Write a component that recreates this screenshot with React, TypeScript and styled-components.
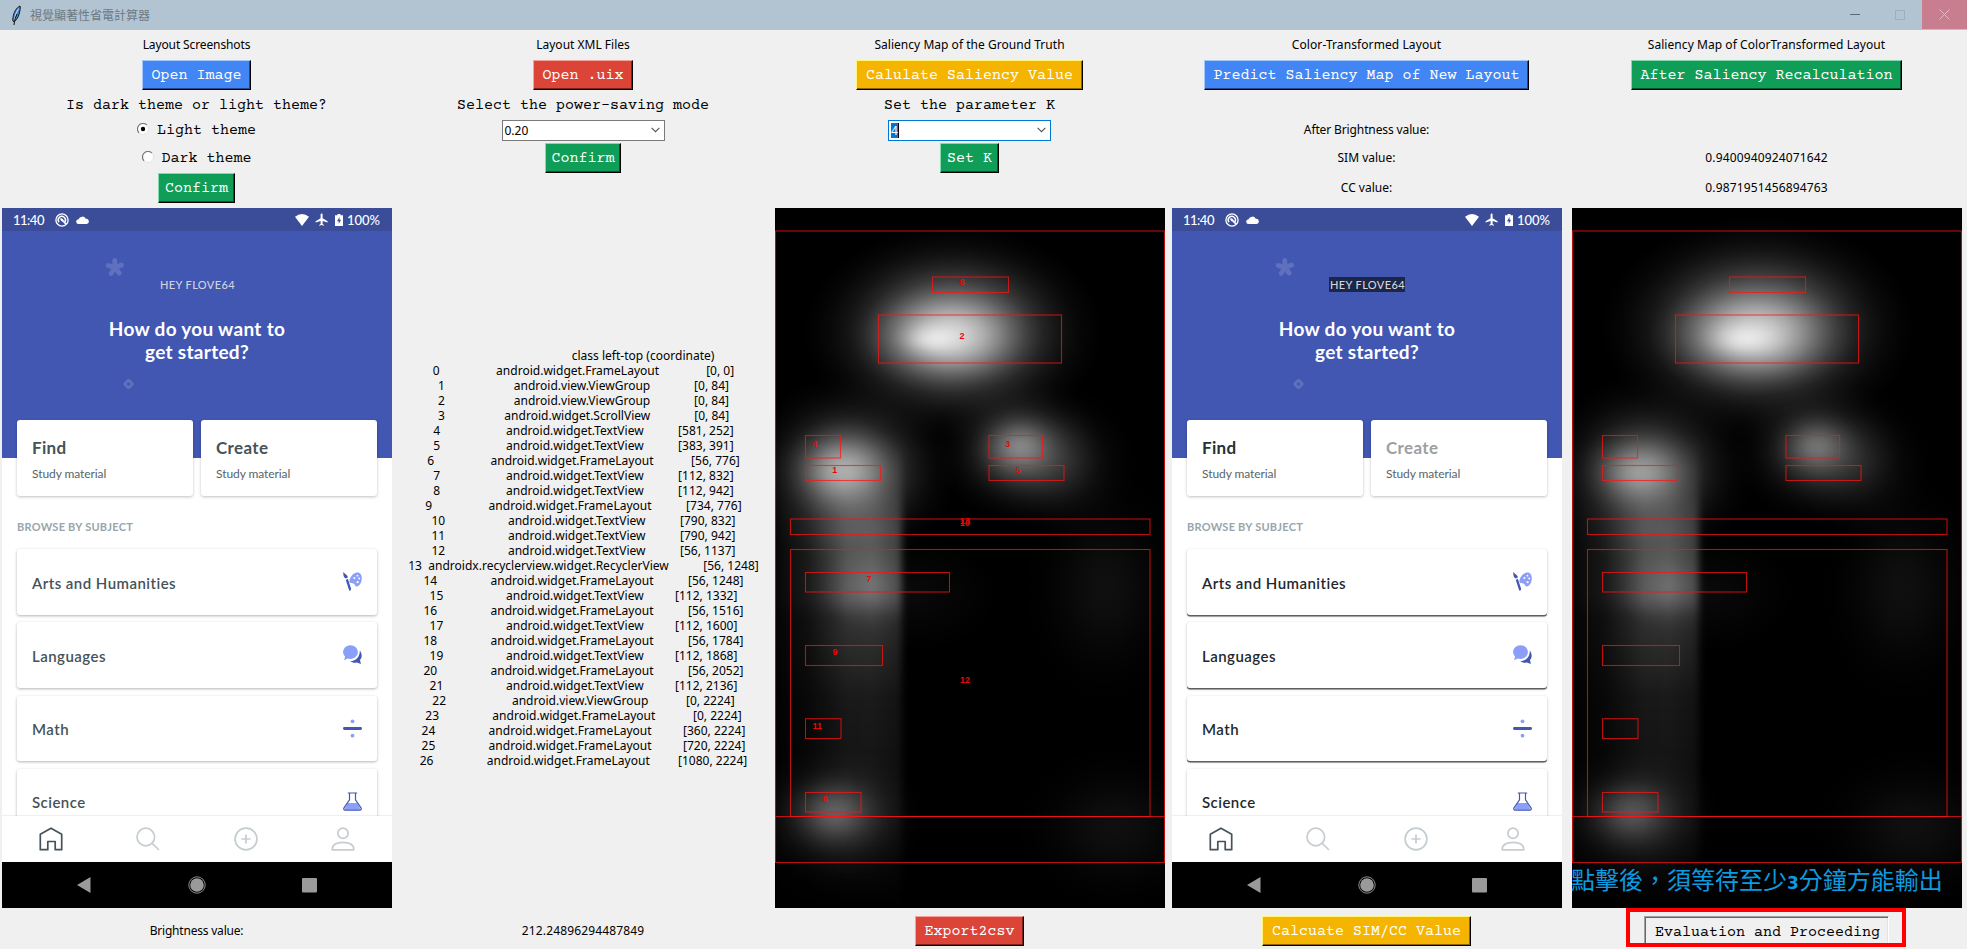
import React from "react";
import styled, { createGlobalStyle, css } from "styled-components";

const UI = `"Noto Sans", "Noto Sans CJK TC", sans-serif`;
const MONO = `"Courier Prime", "Liberation Mono", monospace`;
const PHONE = `Lato, "Open Sans", sans-serif`;

const Global = createGlobalStyle`
  * { box-sizing: border-box; }
  html, body { margin: 0; padding: 0; }
  body { background: #f0f0f0; font-family: ${UI}; font-size: 12px; color: #000; overflow: hidden; }
  svg { display: block; }
`;

/* ---------- window ---------- */

const Window = styled.div`
  width: 1967px;
  height: 949px;
  background: #f0f0f0;
  overflow: hidden;
`;

const TitleBar = styled.header`
  display: flex;
  align-items: center;
  height: 30px;
  padding-left: 10px;
  background: #b2c3d1;
`;

const TitleText = styled.span`
  flex: 1;
  margin-left: 7px;
  padding-bottom: 1px;
  color: #6c7a85;
  font-family: "Noto Sans CJK TC", sans-serif;
  font-size: 12px;
`;

const WindowButton = styled.div<{ $close?: boolean }>`
  display: flex;
  align-items: center;
  justify-content: center;
  align-self: flex-start;
  width: 45px;
  height: 29px;
  background: ${(p) => (p.$close ? "#c87e8e" : "transparent")};
`;

const Board = styled.main`
  display: grid;
  grid-template-columns: 394px 379px 394px 400px 400px;
  grid-template-rows: 29px 32px 26px 26px 30px 30px 710px 36px;
`;

const Cell = styled.div<{ $col: number; $row: number }>`
  grid-column: ${(p) => p.$col};
  grid-row: ${(p) => p.$row};
  display: flex;
  align-items: center;
  justify-content: center;
  position: relative;
  min-width: 0;
  padding-right: ${(p) => (p.$row === 7 ? 0 : 1)}px;
`;

const Label = styled.span<{ $ls?: number }>`
  font-size: 12px;
  line-height: 16px;
  letter-spacing: ${(p) => p.$ls ?? 0}px;
  white-space: nowrap;
`;

const Question = styled.span`
  font-family: ${MONO};
  font-size: 15px;
  line-height: 18px;
  padding-top: 4px;
  white-space: nowrap;
`;

type Tone = "blue" | "red" | "yellow" | "green";
const tones: Record<Tone, { bg: string; light: string; dark: string }> = {
  blue: { bg: "#4285f4", light: "#a3c6fb", dark: "#24498a" },
  red: { bg: "#db4437", light: "#f5a29c", dark: "#7c231b" },
  yellow: { bg: "#f4b400", light: "#fff57c", dark: "#8a6500" },
  green: { bg: "#0f9d58", light: "#84d9ae", dark: "#075430" },
};

const TkButton = styled.button<{ $tone: Tone; $tight?: boolean }>`
  height: 30px;
  margin: 0;
  padding: 2px ${(p) => (p.$tight ? 6 : 9)}px 0;
  border: 1px solid #000;
  border-top-color: ${(p) => tones[p.$tone].light};
  border-left-color: ${(p) => tones[p.$tone].light};
  box-shadow: inset -1px -1px 0 ${(p) => tones[p.$tone].dark};
  background: ${(p) => tones[p.$tone].bg};
  color: #fff;
  font-family: ${MONO};
  font-size: 15px;
  line-height: 18px;
  white-space: nowrap;
`;

const PressedButton = styled.button`
  height: 30px;
  padding: 3px 8px 0 10px;
  border: 1px solid #a0a0a0;
  border-right-color: #fff;
  border-bottom-color: #fff;
  box-shadow: inset 1px 1px 0 #696969, inset -1px 0 0 #e3e3e3;
  background: #f0f0f0;
  color: #000;
  font-family: ${MONO};
  font-size: 15px;
  line-height: 18px;
  white-space: nowrap;
`;

const Highlight = styled.div`
  position: absolute;
  left: 59px;
  top: -5px;
  width: 280px;
  height: 39px;
  border: 4px solid #fe0000;
`;

const RadioLine = styled.label`
  display: flex;
  align-items: center;
  gap: 8px;
  font-family: ${MONO};
  font-size: 15px;
  line-height: 18px;
  span { padding-top: 2px; }
`;

const Combo = styled.div<{ $active?: boolean }>`
  display: flex;
  align-items: center;
  justify-content: space-between;
  width: 163px;
  height: 21px;
  padding: 0 4px 0 2px;
  border: 1px solid ${(p) => (p.$active ? "#0078d7" : "#7a7a7a")};
  background: #fff;
`;

const ComboValue = styled.span<{ $selected?: boolean }>`
  font-size: 12px;
  line-height: 15px;
  ${(p) =>
    p.$selected &&
    css`
      background: #0078d7;
      color: #fff;
      border-right: 1px solid #000;
    `}
`;

const Dump = styled.pre`
  margin: 0;
  font-family: ${UI};
  font-size: 12px;
  line-height: 15px;
  letter-spacing: 0.015px;
  text-align: center;
`;

const Notice = styled.div`
  position: absolute;
  left: 4px;
  top: 658px;
  font-family: "Noto Sans CJK TC", sans-serif;
  font-size: 24px;
  line-height: 36px;
  color: #0a9be0;
  white-space: nowrap;
  b { font-family: "DejaVu Sans", sans-serif; font-size: 17px; font-weight: 700; }
`;

/* ---------- phone ---------- */

const Phone = styled.div`
  display: flex;
  flex-direction: column;
  width: 390px;
  height: 700px;
  background: #fff;
  font-family: ${PHONE};
  overflow: hidden;
`;

const StatusBar = styled.div`
  display: flex;
  align-items: center;
  height: 23px;
  padding: 0 12px 0 11px;
  background: #3b4d98;
  color: #fff;
  font-size: 13px;
  font-weight: 500;
  flex: none;
`;
const Clock = styled.span`
  width: 42px;
  letter-spacing: -0.5px;
`;
const Percent = styled.span`
  margin-left: 4px;
  letter-spacing: 0;
`;
const StatusIcons = styled.div`
  display: flex;
  align-items: center;
  gap: 7px;
  flex: 1;
`;

const Hero = styled.div`
  position: relative;
  height: 227px;
  flex: none;
  display: flex;
  flex-direction: column;
  align-items: center;
  background: #4257b2;
`;
const Decor = styled.svg`
  position: absolute;
  left: 0;
  top: 0;
`;
const Greeting = styled.div<{ $boxed?: boolean }>`
  margin-top: 46px;
  height: 15px;
  padding: 0 0 0 1px;
  font-size: 11px;
  line-height: 16px;
  font-weight: 500;
  letter-spacing: 0.38px;
  color: ${(p) => (p.$boxed ? "#d3d5da" : "#d0d3df")};
  background: ${(p) => (p.$boxed ? "#1c2647" : "transparent")};
  position: relative;
`;
const Headline = styled.h1`
  margin: 25px 0 0;
  font-size: 19px;
  line-height: 23px;
  font-weight: 700;
  letter-spacing: 0.3px;
  color: #fff;
  text-align: center;
  position: relative;
`;

const Tiles = styled.div`
  position: relative;
  display: flex;
  gap: 8px;
  margin: -38px 15px 0;
  flex: none;
`;
const Tile = styled.div`
  flex: 1;
  height: 76px;
  padding: 17px 0 0 15px;
  border-radius: 3px;
  background: #fff;
  box-shadow: 0 1px 3px rgba(0, 0, 0, 0.25);
`;
const TileTitle = styled.div<{ $color: string }>`
  font-size: 17px;
  line-height: 21px;
  font-weight: 700;
  letter-spacing: 0.35px;
  color: ${(p) => p.$color};
`;
const TileSub = styled.div`
  margin-top: 8px;
  font-size: 12px;
  line-height: 15px;
  letter-spacing: -0.08px;
  color: #586469;
`;

const Section = styled.div`
  margin: 23px 15px 0;
  height: 16px;
  flex: none;
  font-size: 11px;
  line-height: 16px;
  font-weight: 700;
  letter-spacing: 0.24px;
  color: #98a6ab;
`;

const List = styled.div`
  display: flex;
  flex-direction: column;
  gap: 7.5px;
  flex: 1;
  min-height: 0;
  padding: 14.3px 15px 0;
  overflow: hidden;
`;
const Item = styled.div<{ $hard?: boolean }>`
  display: flex;
  flex: none;
  align-items: center;
  justify-content: space-between;
  height: 65.7px;
  padding: 0 15px 0 15px;
  border-radius: 3px;
  background: #fff;
  color: ${(p) => (p.$hard ? "#1f292d" : "#455358")};
  font-size: 15px;
  line-height: 20px;
  font-weight: 600;
  letter-spacing: 0.46px;
  box-shadow: ${(p) =>
    p.$hard
      ? "0 1.5px 0 #5d5f61, 0 1px 3px rgba(0,0,0,.25)"
      : "0 1px 3px rgba(0,0,0,.3)"};
  span { padding-top: 1px; }
  svg { margin-top: -1px; }
`;

const Tabs = styled.nav`
  display: flex;
  height: 46px;
  flex: none;
  background: #fff;
  box-shadow: 0 -1px 1px rgba(0, 0, 0, 0.06);
  > div { flex: 1; display: flex; align-items: center; justify-content: center; }
`;
const SystemBar = styled.div`
  display: flex;
  align-items: center;
  justify-content: center;
  gap: 95px;
  height: 46px;
  flex: none;
  background: #000;
`;

const ArtIcon = () => (
  <svg width="19" height="19" viewBox="0 0 19 19">
    <path d="M.3 0C.3 2 .2 4 1.600 5.800l1.300.6 1.900-1C5 3.500 2.500 2.500.3 0Z" fill="#4257b2" />
    <path d="M2.800 8l2-1.200L8.100 16.700q.3 1.800-1.800 2Z" fill="#4257b2" />
    <path d="M13 .8c3.800-1.200 6 2 5.800 6-.2 4-2.600 8-5.300 7.700-1.800-.2-1.200-2-2.600-2.800-1.800-1-4.200.2-4.500-2C6.100 6.500 9.200 2 13 .8Z" fill="#8b9ef8" />
    <g fill="#fff">
      <circle cx="11.400" cy="6" r="1" /><circle cx="14.400" cy="3.700" r=".9" />
      <circle cx="16.200" cy="6.500" r=".9" /><circle cx="14.600" cy="10.200" r="1.100" />
    </g>
  </svg>
);
const ChatIcon = () => (
  <svg width="19" height="19" viewBox="0 0 19 19">
    <path d="M16.800 5.600c2.300 3 2.600 6.700.2 9.300l.9 4-4-1.300c-2.300.6-5 .1-6.600-1.500 5.500.2 9.700-4.200 9.500-10.500Z" fill="#4257b2" />
    <path d="M7.500.2c4.100 0 7.400 3 7.400 6.800s-3.300 6.900-7.400 6.900c-1 0-1.900-.2-2.700-.5L1.200 15.300l.9-4C.8 10.200.1 8.700.1 7 .1 3.200 3.400.2 7.500.2Z" fill="#8b9ef8" />
  </svg>
);
const MathIcon = () => (
  <svg width="19" height="19" viewBox="0 0 19 19">
    <circle cx="9.500" cy="2.300" r="1.900" fill="#8b9ef8" />
    <circle cx="9.500" cy="16.700" r="1.900" fill="#8b9ef8" />
    <rect x="0" y="8" width="19" height="3" rx="1.400" fill="#4257b2" />
  </svg>
);
const FlaskIcon = () => (
  <svg width="19" height="19" viewBox="0 0 19 19">
    <path d="M4.800 11h9.400l3 5.500-1 1.200H2.800l-1-1.200Z" fill="#8b9ef8" />
    <path d="M4.800 1h9.400M6.500 1v6.800L1 15.800c-.7 1.200 0 2.300 1.200 2.300h14.600c1.200 0 1.900-1.100 1.200-2.300L12.500 7.800V1" fill="none" stroke="#4257b2" strokeWidth="1.200" />
  </svg>
);

const subjects = [
  { name: "Arts and Humanities", Icon: ArtIcon },
  { name: "Languages", Icon: ChatIcon },
  { name: "Math", Icon: MathIcon },
  { name: "Science", Icon: FlaskIcon },
];

function PhoneScreen({ altered }: { altered?: boolean }) {
  return (
    <Phone>
      <StatusBar>
        <Clock>11:40</Clock>
        <StatusIcons>
          <svg width="14" height="14" viewBox="0 0 14 14" fill="none" stroke="#fff">
            <circle cx="7" cy="7" r="6.100" strokeWidth="1.300" />
            <path d="M4 9.200A3.600 3.600 0 1 1 9.800 9" strokeWidth="1.500" />
            <path d="M5.500 5.500l5.500 5.500" strokeWidth="1.700" />
            <circle cx="7" cy="7" r="1.300" fill="#fff" stroke="none" />
          </svg>
          <svg width="13" height="8" viewBox="0 0 13 8">
            <path d="M2.700 8A2.400 2.400 0 0 1 2.500 3.200 4 4 0 0 1 9.800 2.800 2.600 2.600 0 0 1 10.600 8Z" fill="#fff" />
          </svg>
        </StatusIcons>
        <svg width="14" height="12" viewBox="0 0 14 12"><path d="M0 2.800Q7-2.600 14 2.800L7 12Z" fill="#fff" /></svg>
        <svg width="26" height="13" viewBox="0 0 26 13">
          <path d="M12.600.5c.8 0 1 .6 1 1.300v3.400l5 3v1.200l-5-1.500v3l1.400 1v.8l-2.400-.6-2.400.6v-.8l1.400-1v-3l-5 1.500V8.200l5-3V1.800c0-.7.200-1.300 1-1.300Z" fill="#fff" />
        </svg>
        <svg width="8" height="12" viewBox="0 0 8 12">
          <path d="M2.500 0h3v1.200H8V12H0V1.200h2.500Z" fill="#fff" />
          <path d="M4.600 3L2 7.200h1.700V10l2.400-4.200H4.500Z" fill="#3b4d98" />
        </svg>
        <Percent>100%</Percent>
      </StatusBar>
      <Hero>
        <Decor width="390" height="227" viewBox="0 0 390 227">
          <g stroke="#5f71be" strokeWidth="4.800" strokeLinecap="round">
            {[-92, -20, 52, 124, 196].map((a) => (
              <line key={a} x1="113" y1="36.500" x2={113 + 7 * Math.cos((a * Math.PI) / 180)} y2={36.5 + 7.2 * Math.sin((a * Math.PI) / 180)} />
            ))}
          </g>
          <rect x="-2.800" y="-2.800" width="5.600" height="5.600" rx=".6" transform="translate(126.500 153) rotate(45)" fill="none" stroke="#5f71be" strokeWidth="2.800" />
        </Decor>
        <Greeting $boxed={altered}>HEY FLOVE64</Greeting>
        <Headline>How do you want to<br />get started?</Headline>
      </Hero>
      <Tiles>
        <Tile>
          <TileTitle $color={altered ? "#263238" : "#455358"}>Find</TileTitle>
          <TileSub>Study material</TileSub>
        </Tile>
        <Tile>
          <TileTitle $color={altered ? "#9da0a1" : "#455358"}>Create</TileTitle>
          <TileSub>Study material</TileSub>
        </Tile>
      </Tiles>
      <Section>BROWSE BY SUBJECT</Section>
      <List>
        {subjects.map(({ name, Icon }) => (
          <Item key={name} $hard={altered}>
            <span>{name}</span>
            <Icon />
          </Item>
        ))}
      </List>
      <Tabs>
        <div>
          <svg width="24" height="24" viewBox="0 0 24 24" fill="none" stroke="#455358" strokeWidth="1.700" strokeLinejoin="round">
            <path d="M1.300 7.200L12 1.200l10.700 6v15.500h-6.500v-8.200H8.800v8.200H1.300Z" />
          </svg>
        </div>
        <div>
          <svg width="24" height="24" viewBox="0 0 24 24" fill="none" stroke="#c5cdd1" strokeWidth="1.700">
            <circle cx="9.800" cy="10" r="8.800" /><path d="M16 16.200l7 6.800" />
          </svg>
        </div>
        <div>
          <svg width="24" height="24" viewBox="0 0 24 24" fill="none" stroke="#c5cdd1" strokeWidth="1.700">
            <circle cx="12" cy="12" r="10.900" /><path d="M12 7.400v9.200M7.400 12h9.200" />
          </svg>
        </div>
        <div>
          <svg width="24" height="24" viewBox="0 0 24 24" fill="none" stroke="#c5cdd1" strokeWidth="1.700" strokeLinejoin="round">
            <circle cx="12" cy="6.200" r="5.100" /><path d="M1.200 22.800C1 17.500 6 15.300 12 15.300s11 2.200 10.800 7.500Z" />
          </svg>
        </div>
      </Tabs>
      <SystemBar>
        <svg width="17" height="18" viewBox="0 0 17 18"><path d="M14.500 1v16L1 9Z" fill="#9a9a9a" /></svg>
        <svg width="18" height="18" viewBox="0 0 18 18">
          <circle cx="9" cy="9" r="8.200" fill="none" stroke="#9a9a9a" strokeWidth=".9" />
          <circle cx="9" cy="9" r="6.800" fill="#9a9a9a" />
        </svg>
        <svg width="17" height="18" viewBox="0 0 17 18"><rect x="1" y="2" width="15" height="14.500" rx="1" fill="#9a9a9a" /></svg>
      </SystemBar>
    </Phone>
  );
}

/* ---------- saliency map ---------- */

type Blob = [cx: number, cy: number, rx: number, ry: number, level: number];

const groundBlobs: Blob[] = [
  [178, 124, 150, 108, 0.62],
  [172, 129, 96, 56, 0.6],
  [158, 131, 44, 22, 0.5],
  [75, 262, 108, 96, 0.42],
  [66, 262, 66, 54, 0.42],
  [244, 242, 84, 74, 0.34],
  [244, 238, 50, 42, 0.25],
  [285, 255, 80, 80, 0.14],
  [60, 608, 92, 72, 0.2],
  [59, 604, 56, 46, 0.18],
  [330, 380, 90, 130, 0.06],
  [340, 620, 110, 90, 0.06],
];
const alteredBlobs: Blob[] = [
  [186, 120, 158, 112, 0.6],
  [180, 129, 104, 60, 0.6],
  [172, 131, 50, 24, 0.5],
  [75, 262, 108, 96, 0.36],
  [66, 264, 66, 50, 0.36],
  [244, 242, 84, 74, 0.27],
  [244, 238, 50, 42, 0.22],
  [285, 255, 80, 80, 0.11],
  [60, 608, 92, 72, 0.17],
  [59, 604, 56, 46, 0.15],
  [330, 380, 90, 130, 0.06],
  [340, 620, 110, 90, 0.06],
];

const boxes: [number, number, number, number][] = [
  [0.5, 23, 389, 631.5],
  [157.5, 69, 76, 15.5],
  [103.5, 107, 183, 48],
  [30.5, 227.5, 35, 22.5],
  [30.5, 257.5, 75, 15],
  [214, 227.5, 53.5, 22.5],
  [214, 257.5, 75, 15],
  [15.5, 311, 359.5, 15.5],
  [15.5, 341.5, 359.5, 267],
  [30.5, 364.5, 144, 19.5],
  [30.5, 437.5, 77, 20],
  [30.5, 510.7, 35.5, 19.8],
  [30.5, 584.5, 55.5, 19.5],
];

const marks: [string, number, number][] = [
  ["8", 187, 73.500], ["2", 187, 127.8], ["4", 39.7, 235.5], ["3", 232.7, 235.5],
  ["1", 59.7, 262.2], ["5", 243, 262.2], ["13", 190, 312.5], ["10", 190, 315],
  ["7", 94, 371], ["9", 60, 444.2], ["12", 190, 471.5], ["11", 42.3, 517.5], ["6", 50, 591],
];

const falloff = [0, 0.1, 0.2, 0.3, 0.4, 0.5, 0.6, 0.7, 0.8, 0.9, 1];
const glow = (r: number) => Math.max(0, Math.exp(-r * r * 4) - 0.018 * r);

function SaliencyMap({ id, blobs, numbered, strip }: { id: string; blobs: Blob[]; numbered?: boolean; strip: number }) {
  return (
    <svg width="390" height="700" viewBox="0 0 390 700">
      <defs>
        {blobs.map((b, i) => (
          <radialGradient key={i} id={`${id}-${i}`}>
            {falloff.map((r) => (
              <stop key={r} offset={r} stopColor="#fff" stopOpacity={b[4] * glow(r)} />
            ))}
          </radialGradient>
        ))}
        <linearGradient id={`${id}-v`} x1="0" x2="0" y1="230" y2="700" gradientUnits="userSpaceOnUse">
          <stop offset="0" stopColor="#fff" stopOpacity="0" />
          <stop offset=".1" stopColor="#fff" stopOpacity={0.1 * strip} />
          <stop offset=".2" stopColor="#fff" stopOpacity={0.29 * strip} />
          <stop offset=".34" stopColor="#fff" stopOpacity={0.28 * strip} />
          <stop offset=".38" stopColor="#fff" stopOpacity={0.18 * strip} />
          <stop offset=".47" stopColor="#fff" stopOpacity={0.14 * strip} />
          <stop offset=".55" stopColor="#fff" stopOpacity={0.09 * strip} />
          <stop offset=".8" stopColor="#fff" stopOpacity={0.06 * strip} />
          <stop offset="1" stopColor="#fff" stopOpacity="0" />
        </linearGradient>
        <linearGradient id={`${id}-h`} x1="0" x2="130" y1="0" y2="0" gradientUnits="userSpaceOnUse">
          <stop offset="0" stopColor="#fff" stopOpacity=".08" />
          <stop offset=".25" stopColor="#fff" stopOpacity=".3" />
          <stop offset=".55" stopColor="#fff" stopOpacity=".95" />
          <stop offset=".75" stopColor="#fff" />
          <stop offset="1" stopColor="#fff" stopOpacity=".65" />
        </linearGradient>
        <mask id={`${id}-m`} maskUnits="userSpaceOnUse" x="0" y="0" width="390" height="700">
          <rect width="127" height="700" fill={`url(#${id}-h)`} />
        </mask>
        <radialGradient id={`${id}-p`}>
          <stop offset="0" stopColor="#fff" stopOpacity={0.16 * strip} />
          <stop offset=".5" stopColor="#fff" stopOpacity={0.07 * strip} />
          <stop offset="1" stopColor="#fff" stopOpacity="0" />
        </radialGradient>
        <filter id={`${id}-b`} x="-10%" y="-10%" width="120%" height="120%"><feGaussianBlur stdDeviation="3.5" /></filter>
      </defs>
      <rect width="390" height="700" fill="#000" />
      <g filter={`url(#${id}-b)`}>
        <g mask={`url(#${id}-m)`}>
          <rect x="0" y="230" width="130" height="470" fill={`url(#${id}-v)`} />
          <ellipse cx="98" cy="378" rx="56" ry="44" fill={`url(#${id}-p)`} />
        </g>
      </g>
      <ellipse cx="135" cy="385" rx="90" ry="60" fill={`url(#${id}-p)`} opacity=".22" />
      {blobs.map((b, i) => (
        <ellipse key={i} cx={b[0]} cy={b[1]} rx={b[2]} ry={b[3]} fill={`url(#${id}-${i})`} />
      ))}
      <g fill="none" stroke="#ff1414" strokeOpacity=".72" strokeWidth="1.100">
        {boxes.map(([x, y, w, h], i) => <rect key={i} x={x} y={y} width={w} height={h} />)}
        <line x1="0" x2="390" y1="608.500" y2="608.500" />
      </g>
      {numbered && (
        <g fill="#ea0808" fontFamily="Liberation Sans" fontSize="9" fontWeight="700" textAnchor="middle">
          {marks.map(([t, x, y]) => <text key={t} x={x} y={y + 3.2}>{t}</text>)}
        </g>
      )}
    </svg>
  );
}

/* ---------- widget dump ---------- */

const frame = "android.widget.FrameLayout";
const group = "android.view.ViewGroup";
const textView = "android.widget.TextView";
const widgets: [string, string][] = [
  [frame, "[0, 0]"], [group, "[0, 84]"], [group, "[0, 84]"], ["android.widget.ScrollView", "[0, 84]"],
  [textView, "[581, 252]"], [textView, "[383, 391]"], [frame, "[56, 776]"], [textView, "[112, 832]"],
  [textView, "[112, 942]"], [frame, "[734, 776]"], [textView, "[790, 832]"], [textView, "[790, 942]"],
  [textView, "[56, 1137]"], ["androidx.recyclerview.widget.RecyclerView", "[56, 1248]"], [frame, "[56, 1248]"],
  [textView, "[112, 1332]"], [frame, "[56, 1516]"], [textView, "[112, 1600]"], [frame, "[56, 1784]"],
  [textView, "[112, 1868]"], [frame, "[56, 2052]"], [textView, "[112, 2136]"], [group, "[0, 2224]"],
  [frame, "[0, 2224]"], [frame, "[360, 2224]"], [frame, "[720, 2224]"], [frame, "[1080, 2224]"],
];
const dumpText = [
  " ".repeat(38) + "class left-top (coordinate)",
  ...widgets.map(([cls, pos], i) => String(i).padEnd(4) + cls.padStart(41) + pos.padStart(21)),
].join("\n");

const Chevron = () => (
  <svg width="9" height="6" viewBox="0 0 9 6" fill="none" stroke="#555" strokeWidth="1.100"><path d="M.6.8l3.900 3.900L8.400.8" /></svg>
);

const Radio = ({ checked }: { checked?: boolean }) => (
  <svg width="12" height="14" viewBox="0 0 12 14">
    <circle cx="6" cy="6" r="5.500" fill="#fff" />
    <path d="M2.100 9.900A5.500 5.500 0 0 1 9.900 2.100" fill="none" stroke="#777" strokeWidth="1.200" />
    <path d="M9.900 2.100A5.500 5.500 0 0 1 2.100 9.900" fill="none" stroke="#e3e3e3" />
    {checked && <circle cx="6" cy="6" r="2.200" />}
  </svg>
);

export default function App() {
  return (
    <Window>
      <Global />
      <TitleBar>
        <svg width="13" height="24" viewBox="0 0 13 24">
          <path d="M10 3C6.500 4.500 3 9.500 2.700 17.500L4 19c3.500-2.500 6-8 6.300-15Z" fill="#3f7fc4" stroke="#111" strokeWidth=".9" />
          <path d="M8.600 5.500C6 9.500 4.800 13 4.300 17" stroke="#b9dcff" strokeWidth="1.100" fill="none" />
          <path d="M7 11C5.500 14 4.500 17 4 22" stroke="#111" strokeWidth="1" fill="none" />
        </svg>
        <TitleText>視覺顯著性省電計算器</TitleText>
        <WindowButton>
          <svg width="10" height="10" viewBox="0 0 10 10"><path d="M0 4.500h10" stroke="#5c6972" /></svg>
        </WindowButton>
        <WindowButton>
          <svg width="10" height="10" viewBox="0 0 10 10"><rect x=".5" y=".5" width="9" height="9" fill="none" stroke="#9eafbd" /></svg>
        </WindowButton>
        <WindowButton $close>
          <svg width="11" height="11" viewBox="0 0 11 11"><path d="M.5.5l10 10M10.500.5l-10 10" stroke="#e3bcc5" /></svg>
        </WindowButton>
      </TitleBar>
      <Board>
        <Cell $col={1} $row={1}><Label $ls={-0.12}>Layout Screenshots</Label></Cell>
        <Cell $col={2} $row={1}><Label>Layout XML Files</Label></Cell>
        <Cell $col={3} $row={1}><Label $ls={0.03}>Saliency Map of the Ground Truth</Label></Cell>
        <Cell $col={4} $row={1}><Label $ls={0.09}>Color-Transformed Layout</Label></Cell>
        <Cell $col={5} $row={1}><Label $ls={0.06}>Saliency Map of ColorTransformed Layout</Label></Cell>

        <Cell $col={1} $row={2}><TkButton $tone="blue">Open Image</TkButton></Cell>
        <Cell $col={2} $row={2}><TkButton $tone="red">Open .uix</TkButton></Cell>
        <Cell $col={3} $row={2}><TkButton $tone="yellow">Calulate Saliency Value</TkButton></Cell>
        <Cell $col={4} $row={2}><TkButton $tone="blue">Predict Saliency Map of New Layout</TkButton></Cell>
        <Cell $col={5} $row={2}><TkButton $tone="green">After Saliency Recalculation</TkButton></Cell>

        <Cell $col={1} $row={3}><Question>Is dark theme or light theme?</Question></Cell>
        <Cell $col={2} $row={3}><Question>Select the power-saving mode</Question></Cell>
        <Cell $col={3} $row={3}><Question>Set the parameter K</Question></Cell>

        <Cell $col={1} $row={4}><RadioLine><Radio checked /><span>Light theme</span></RadioLine></Cell>
        <Cell $col={2} $row={4}><Combo><ComboValue>0.20</ComboValue><Chevron /></Combo></Cell>
        <Cell $col={3} $row={4}><Combo $active><ComboValue $selected>4</ComboValue><Chevron /></Combo></Cell>
        <Cell $col={4} $row={4}><Label $ls={-0.12}>After Brightness value:</Label></Cell>

        <Cell $col={1} $row={5}><RadioLine><Radio /><span>Dark theme</span></RadioLine></Cell>
        <Cell $col={2} $row={5}><TkButton $tone="green" $tight>Confirm</TkButton></Cell>
        <Cell $col={3} $row={5}><TkButton $tone="green" $tight>Set K</TkButton></Cell>
        <Cell $col={4} $row={5}><Label>SIM value:</Label></Cell>
        <Cell $col={5} $row={5}><Label $ls={0.14}>0.9400940924071642</Label></Cell>

        <Cell $col={1} $row={6}><TkButton $tone="green" $tight>Confirm</TkButton></Cell>
        <Cell $col={4} $row={6}><Label>CC value:</Label></Cell>
        <Cell $col={5} $row={6}><Label $ls={0.14}>0.9871951456894763</Label></Cell>

        <Cell $col={1} $row={7}><PhoneScreen /></Cell>
        <Cell $col={2} $row={7}><Dump>{dumpText}</Dump></Cell>
        <Cell $col={3} $row={7}><SaliencyMap id="truth" blobs={groundBlobs} strip={1.15} numbered /></Cell>
        <Cell $col={4} $row={7}><PhoneScreen altered /></Cell>
        <Cell $col={5} $row={7}>
          <SaliencyMap id="altered" blobs={alteredBlobs} strip={1.1} />
          <Notice>點擊後，須等待至少<b>3</b>分鐘方能輸出</Notice>
        </Cell>

        <Cell $col={1} $row={8}><Label $ls={-0.2}>Brightness value:</Label></Cell>
        <Cell $col={2} $row={8}><Label $ls={0.14}>212.24896294487849</Label></Cell>
        <Cell $col={3} $row={8}><TkButton $tone="red">Export2csv</TkButton></Cell>
        <Cell $col={4} $row={8}><TkButton $tone="yellow">Calcuate SIM/CC Value</TkButton></Cell>
        <Cell $col={5} $row={8}><PressedButton>Evaluation and Proceeding</PressedButton><Highlight /></Cell>
      </Board>
    </Window>
  );
}
